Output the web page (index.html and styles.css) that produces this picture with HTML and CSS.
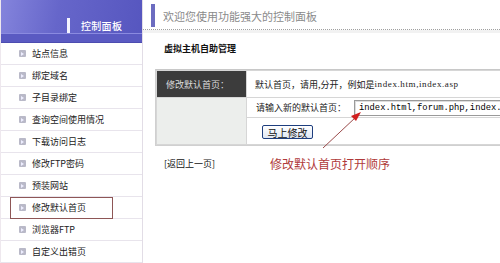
FILE: index.html
```html
<!DOCTYPE html>
<html lang="zh-CN">
<head>
<meta charset="utf-8">
<title>控制面板</title>
<link rel="stylesheet" href="styles.css">
</head>
<body>
<div class="page">
  <aside class="sidebar">
    <div class="side-head"><span class="side-mark"></span><span class="side-title">控制面板</span></div>
    <ul class="menu">
      <li><i class="ico"></i>站点信息</li>
      <li><i class="ico"></i>绑定域名</li>
      <li><i class="ico"></i>子目录绑定</li>
      <li><i class="ico"></i>查询空间使用情况</li>
      <li><i class="ico"></i>下载访问日志</li>
      <li><i class="ico"></i>修改FTP密码</li>
      <li><i class="ico"></i>预装网站</li>
      <li class="active"><span class="sel"><i class="ico"></i>修改默认首页</span></li>
      <li><i class="ico"></i>浏览器FTP</li>
      <li><i class="ico"></i>自定义出错页</li>
    </ul>
  </aside>
  <main class="main">
    <div class="top"><span class="top-mark"></span><span class="top-title">欢迎您使用功能强大的控制面板</span></div>
    <div class="band"></div>
    <div class="sub">虚拟主机自助管理</div>
    <div class="form">
      <div class="lab">修改默认首页：</div>
      <div class="val hint">默认首页，请用,分开，例如是<span class="lat">index.htm,index.asp</span></div>
      <div class="blank"></div>
      <div class="val inrow">请输入新的默认首页：<span class="input">index.html,forum.php,index.</span></div>
      <div class="val btnrow"><span class="btn">马上修改</span></div>
    </div>
    <div class="foot"><span class="back">[返回上一页]</span><span class="note">修改默认首页打开顺序</span></div>
    <svg class="arrow" width="60" height="50" viewBox="0 0 60 50">
      <line x1="3" y1="45" x2="36" y2="14" stroke="#9a4a4a" stroke-width="1"/>
      <polygon points="41,9 31,13 36,18" fill="#d02020"/>
    </svg>
  </main>
</div>
</body>
</html>
```

FILE: styles.css
```css
* { box-sizing: border-box; }
html, body { margin: 0; padding: 0; background: #fff; }
body {
  width: 500px; height: 263px; overflow: hidden;
  font-family: "Noto Sans CJK SC", "Liberation Sans", sans-serif;
  color: #222;
}
.page { display: flex; height: 263px; }

.sidebar {
  width: 143px; flex: none;
  border-right: 1px solid #e2dde6;
  border-left: 1px solid #eee8ee;
}
.side-head {
  height: 43px;
  background: linear-gradient(100deg, #8484dc 0%, #6666ca 40%, #5656bf 100%);
  border-bottom: 1px solid #4c4cb0;
  box-shadow: inset 0 -8px 0 #5a5ac2, inset 0 -9px 0 #8a8ae0;
  display: flex; align-items: center;
  padding: 9px 0 0 66px;
}
.side-mark { width: 3px; height: 15px; background: #f4f4ff; margin-right: 11px; }
.side-title { color: #fff; font-size: 10px; letter-spacing: 0.3px; font-weight: 500; }

.menu { list-style: none; margin: 0; padding: 0; }
.menu li {
  height: 22px; border-bottom: 1px solid #e8e4ec;
  display: flex; align-items: center;
  padding-left: 18px;
  font-size: 9px; color: #222;
}
.ico {
  width: 7px; height: 7px; margin-right: 6px; flex: none;
  background: #b9b9c8; border-radius: 1px; position: relative;
}
.ico::after {
  content: ""; position: absolute; left: 2px; top: 1.5px;
  border-left: 3px solid #eef; border-top: 2px solid transparent; border-bottom: 2px solid transparent;
}
.menu li.active { padding-left: 9px; }
.sel {
  display: flex; align-items: center;
  width: 103px; height: 22px;
  border: 1px solid #8e5656;
  padding-left: 8px;
}

.main { flex: 1; position: relative; overflow: hidden; }
.top {
  height: 30px; display: flex; align-items: center;
  padding-left: 8px;
  border-bottom: 1px dotted #a0a0a0;
}
.top-mark { width: 4px; height: 23px; background: #6c6cc0; margin-right: 8px; margin-top: 2px; }
.top-title { color: #8a8a8a; font-size: 11px; margin-top: 2px; }
.band { height: 3px; background: #f2f2f2; }
.sub {
  height: 36px; padding-left: 21px; padding-top: 9px;
  font-size: 9px; font-weight: 700; color: #111;
}

.form {
  margin-left: 12px; width: 420px;
  display: grid;
  grid-template-columns: 89px 1fr;
  grid-template-rows: 26px 19px 26px;
  gap: 1px 1px;
  border-top: 1px solid #c8c8c8;
  border-left: 1px solid #d0d0d0;
  border-bottom: 1px solid #d0d0d0;
  background: #d6d6d6;
  padding: 1px 0 1px 1px;
  font-size: 9px;
}
.lab {
  background: #3c3c3c; color: #dcdcdc;
  display: flex; align-items: center; padding-left: 9px;
}
.val { background: #fff; display: flex; align-items: center; padding-left: 8px; }
.blank { background: #eceeec; grid-row: 2 / 4; grid-column: 1; }
.inrow { grid-column: 2; grid-row: 2; padding-left: 9px; }
.btnrow { grid-column: 2; grid-row: 3; padding-left: 15px; }
.lat { font-family: "Liberation Serif", serif; font-size: 9px; letter-spacing: 0.6px; }
.input {
  margin-left: 8px; height: 16px; flex: 1;
  border: 1px solid #9a9a9a; border-right: none;
  box-shadow: inset 1px 1px 0 #ddd;
  font-family: "Liberation Mono", monospace; font-size: 8.8px; color: #000;
  display: flex; align-items: center; padding-left: 4px; white-space: nowrap; overflow: hidden;
}
.btn {
  width: 51px; height: 14px; border: 1px solid #1e3e7e; border-radius: 2px;
  background: linear-gradient(#ffffff, #dfe7f4);
  font-size: 10px; color: #111;
  display: flex; align-items: center; justify-content: center;
  margin-top: 2px;
}

.foot { display: flex; align-items: center; padding: 9px 0 0 21px; }
.back { font-size: 9px; color: #111; width: 106px; }
.note { font-size: 12px; color: #b03a3a; }
.arrow { position: absolute; left: 177px; top: 103px; }
```
